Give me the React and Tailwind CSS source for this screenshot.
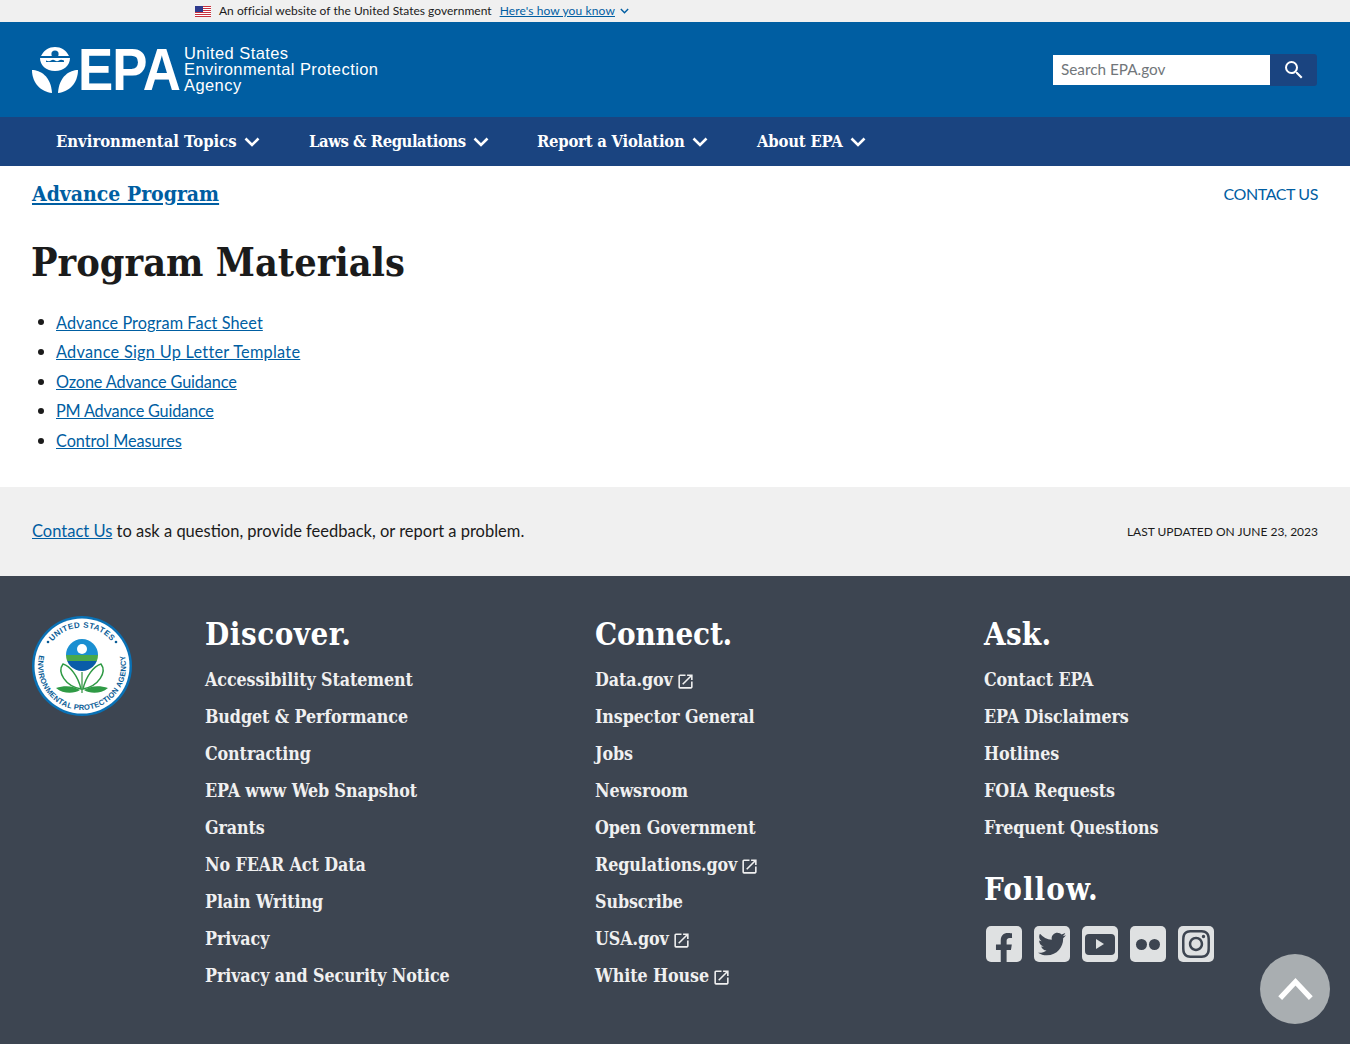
import { FaFacebookF, FaTwitter, FaInstagram } from "react-icons/fa";
import { MdSearch, MdOpenInNew } from "react-icons/md";

const SANS = "font-['Lato','Noto_Sans',sans-serif]";
const SERIF = "font-['DejaVu_Serif_Condensed','DejaVu_Serif',serif]";

const materials = [
  { label: "Advance Program Fact Sheet", track: "tracking-[0.08px]" },
  { label: "Advance Sign Up Letter Template", track: "tracking-[0.27px]" },
  { label: "Ozone Advance Guidance", track: "tracking-[-0.13px]" },
  { label: "PM Advance Guidance", track: "tracking-[-0.2px]" },
  { label: "Control Measures", track: "tracking-[-0.05px]" },
];

const navItems = [
  { label: "Environmental Topics", width: "w-[253px]", track: "tracking-[0px]" },
  { label: "Laws & Regulations", width: "w-[228px]", track: "tracking-[-0.45px]" },
  { label: "Report a Violation", width: "w-[220px]", track: "tracking-[-0.24px]" },
  { label: "About EPA", width: "w-[130px]", track: "tracking-[-0.2px]" },
];

const discover = [
  "Accessibility Statement", "Budget & Performance", "Contracting", "EPA www Web Snapshot",
  "Grants", "No FEAR Act Data", "Plain Writing", "Privacy", "Privacy and Security Notice",
];

const connect = [
  { label: "Data.gov", ext: true }, { label: "Inspector General" }, { label: "Jobs" },
  { label: "Newsroom" }, { label: "Open Government" }, { label: "Regulations.gov", ext: true },
  { label: "Subscribe" }, { label: "USA.gov", ext: true }, { label: "White House", ext: true },
];

const ask = ["Contact EPA", "EPA Disclaimers", "Hotlines", "FOIA Requests", "Frequent Questions"];

function Chevron({ className }) {
  return (
    <svg viewBox="0 0 16 10" className={className} fill="none" stroke="currentColor" strokeWidth="2.6">
      <path d="M1.5 1.5 8 8l6.5-6.5" />
    </svg>
  );
}

function Flag() {
  return (
    <svg viewBox="0 0 16 11" className="w-4 h-[11px]">
      <rect width="16" height="11" fill="#fff" />
      {[0, 2, 4, 6, 8, 10].map((y) => (
        <rect key={y} y={y} width="16" height="1" fill="#c8313e" />
      ))}
      <rect width="8" height="6" fill="#2e3a8c" />
    </svg>
  );
}

function Flower({ className }) {
  return (
    <svg viewBox="0 0 46 46" className={className} fill="#fff">
      <path d="M23 0c6 0 11 3 14 9H9c3-6 8-9 14-9z" />
      <circle cx="23" cy="7" r="3.6" fill="#005ea2" />
      <path d="M8 11h30c0 7-6 13-15 13S8 18 8 11z" />
      <path d="M14 13.5c2 1 4 1 5 0s3-1 4 0 3 1 4 0 3-1 5 0v1.5H14z" fill="#005ea2" />
      <path d="M0 23c8 0 19 6 20 23C9 45 0 36 0 23z" />
      <path d="M46 23c-8 0-19 6-20 23 11-1 20-10 20-23z" />
    </svg>
  );
}

function Seal({ className }) {
  return (
    <svg viewBox="0 0 100 100" className={className}>
      <circle cx="50" cy="50" r="50" fill="#0a71b5" />
      <circle cx="50" cy="50" r="47.5" fill="#fff" />
      <defs>
        <path id="sealTop" d="M11.5 50a38.5 38.5 0 0 1 77 0" />
        <path id="sealBottom" d="M10.1 31.4a44 44 0 1 0 79.8 0" />
        <clipPath id="globe"><circle cx="50" cy="39" r="16" /></clipPath>
      </defs>
      <text fontFamily="Liberation Sans, sans-serif" fontSize="8" fontWeight="700" fill="#0a5c96" textAnchor="middle" letterSpacing="0.4">
        <textPath href="#sealTop" startOffset="50%">UNITED STATES</textPath>
      </text>
      <text fontFamily="Liberation Sans, sans-serif" fontSize="7.6" fontWeight="700" fill="#0a5c96" textAnchor="middle" letterSpacing="0.25">
        <textPath href="#sealBottom" startOffset="50%">ENVIRONMENTAL PROTECTION AGENCY</textPath>
      </text>
      <circle cx="16" cy="26" r="1.3" fill="#0a5c96" />
      <circle cx="84" cy="26" r="1.3" fill="#0a5c96" />
      <g clipPath="url(#globe)">
        <rect x="30" y="22" width="40" height="17" fill="#1a8fd1" />
        <rect x="30" y="39" width="40" height="6" fill="#4aa94a" />
        <rect x="30" y="45" width="40" height="11" fill="#0a5ca8" />
      </g>
      <circle cx="50" cy="33" r="5" fill="#fff" />
      <path d="M50 56v21" stroke="#2f8f3f" strokeWidth="1.2" />
      <path d="M49 73C46 60 38 50 31 48c-6 8 2 22 18 25zM51 73c3-13 11-23 18-25 6 8-2 22-18 25z" fill="#fff" stroke="#2f9a45" strokeWidth="1.5" />
      <path d="M48 74c-6-4-15-5-24-2 7 6 18 6 24 2zM52 74c6-4 15-5 24-2-7 6-18 6-24 2z" fill="#2f9a45" />
    </svg>
  );
}

function Social({ children }) {
  return (
    <a className="w-9 h-9 rounded-[5px] bg-[#dfe1e2] text-[#3d4551] flex items-center justify-center overflow-hidden">
      {children}
    </a>
  );
}

function FooterLink({ label, ext }) {
  return (
    <li className="h-[37px] flex items-center">
      <a className="text-[#f0f0f0] text-[17.7px] font-bold tracking-[-0.08px] whitespace-nowrap">{label}</a>
      {ext && <MdOpenInNew className="ml-[3px] mt-[1px] w-[19px] h-[19px] text-[#f0f0f0]" />}
    </li>
  );
}

export default function App() {
  return (
    <div className={`relative h-[1044px] overflow-hidden bg-white text-[#1b1b1b] ${SANS}`}>
      {/* GOV BANNER */}
      <div className="h-[22px] bg-[#f0f0f0] pl-[195px] flex items-center text-[12px]">
        <Flag />
        <span className="ml-2 tracking-[0.02px]">An official website of the United States government</span>
        <a className="ml-2 text-[#005ea2] underline tracking-[0.12px]">Here's how you know</a>
        <Chevron className="ml-[5px] w-[9px] h-[6px] text-[#005ea2]" />
      </div>

      {/* HEADER */}
      <header className="h-[95px] bg-[#005ea2] pl-8 pr-8 flex items-center justify-between">
        <div className="flex items-center text-white">
          <Flower className="w-[46px] h-[46px]" />
          <span className="w-[106px] origin-left scale-x-[0.88] font-['Liberation_Sans',sans-serif] font-bold text-[60px] leading-[46px] tracking-[-1px] whitespace-nowrap">EPA</span>
          <span className="font-['Liberation_Sans',sans-serif] text-[16.5px] leading-[16px] tracking-[0.42px] -mt-[2px]">
            United States<br />Environmental Protection<br />Agency
          </span>
        </div>
        <div className="flex items-center mr-px">
          <div className="w-[217px] h-[30px] bg-white flex items-center pl-2 text-[15.3px] text-[#71767a]">Search EPA.gov</div>
          <button className="w-[47px] h-[32px] bg-[#1a4480] rounded-r-[3px] flex items-center justify-center text-white">
            <MdSearch className="w-[24px] h-[24px]" />
          </button>
        </div>
      </header>

      {/* NAV */}
      <nav className={`h-[49px] bg-[#1a4480] pl-14 flex items-center text-white text-[16.5px] font-bold ${SERIF}`}>
        {navItems.map((item) => (
          <a key={item.label} className={`flex items-center ${item.width}`}>
            <span className={`mt-[1px] ${item.track}`}>{item.label}</span>
            <Chevron className="ml-[7px] w-4 h-[10px]" />
          </a>
        ))}
      </nav>

      {/* PAGE */}
      <main className="h-[321px] px-8 relative">
        <div className="flex justify-between items-center pt-[13px]">
          <a className={`text-[#005ea2] underline text-[21px] font-bold leading-[30px] ${SERIF}`}>Advance Program</a>
          <a className="text-[#005ea2] text-[16px] tracking-[-0.4px]">CONTACT US</a>
        </div>
        <h1 className={`mt-[28px] -ml-[1px] text-[39.3px] leading-[50px] font-bold ${SERIF}`}>Program Materials</h1>
        <ul className="mt-[20.7px] text-[16.3px] leading-[29.6px]">
          {materials.map((m) => (
            <li key={m.label} className="flex items-center">
              <span className="ml-[6px] mr-[12px] w-[6px] h-[6px] rounded-full bg-[#1b1b1b]" />
              <a className={`text-[#005ea2] underline ${m.track}`}>{m.label}</a>
            </li>
          ))}
        </ul>
      </main>

      {/* LAST UPDATED */}
      <div className="h-[89px] bg-[#f0f0f0] px-8 flex items-center justify-between">
        <p className="text-[16.5px] -mt-[1px]">
          <a className="text-[#005ea2] underline">Contact Us</a> to ask a question, provide feedback, or report a problem.
        </p>
        <p className="text-[12px]">LAST UPDATED ON JUNE 23, 2023</p>
      </div>

      {/* FOOTER */}
      <footer className={`h-[468px] bg-[#3d4551] px-8 pt-[40px] flex ${SERIF}`}>
        <div className="w-[173px] shrink-0">
          <Seal className="w-[100px] h-[100px]" />
        </div>
        <div className="flex-1 grid grid-cols-[390px_389px_1fr]">
          <div>
            <h2 className="text-white text-[31px] leading-[36px] font-bold mb-[10px] tracking-[0.55px]">Discover.</h2>
            <ul>{discover.map((d) => <FooterLink key={d} label={d} />)}</ul>
          </div>
          <div>
            <h2 className="text-white text-[31px] leading-[36px] font-bold mb-[10px] tracking-[-0.2px]">Connect.</h2>
            <ul>{connect.map((c) => <FooterLink key={c.label} label={c.label} ext={c.ext} />)}</ul>
          </div>
          <div>
            <h2 className="text-white text-[31px] leading-[36px] font-bold mb-[10px] tracking-[0.25px]">Ask.</h2>
            <ul>{ask.map((a) => <FooterLink key={a} label={a} />)}</ul>
            <h2 className="mt-[24px] text-white text-[31px] leading-[36px] font-bold tracking-[1.1px]">Follow.</h2>
            <div className="mt-[19px] ml-[2px] flex gap-3">
              <Social><FaFacebookF className="w-[24px] h-[30px] mt-2" /></Social>
              <Social><FaTwitter className="w-[28px] h-[28px]" /></Social>
              <Social>
                <span className="w-[30px] h-[21px] rounded-[4px] bg-[#3d4551] flex items-center justify-center">
                  <span className="border-l-[8px] border-l-[#dfe1e2] border-y-[5px] border-y-transparent" />
                </span>
              </Social>
              <Social>
                <span className="flex gap-[2px]">
                  <span className="w-[11px] h-[11px] rounded-full bg-[#3d4551]" />
                  <span className="w-[11px] h-[11px] rounded-full bg-[#3d4551]" />
                </span>
              </Social>
              <Social><FaInstagram className="w-[32px] h-[32px]" /></Social>
            </div>
          </div>
        </div>
      </footer>

      {/* BACK TO TOP */}
      <a className="absolute left-[1260px] top-[954px] w-[70px] h-[70px] rounded-full bg-[#a9aeb1] flex items-center justify-center text-white">
        <svg viewBox="0 0 36 24" className="w-[35px] h-[23px] -mt-[1px]" fill="none" stroke="currentColor" strokeWidth="5.5">
          <path d="M2 22 18 5l16 17" />
        </svg>
      </a>
    </div>
  );
}
